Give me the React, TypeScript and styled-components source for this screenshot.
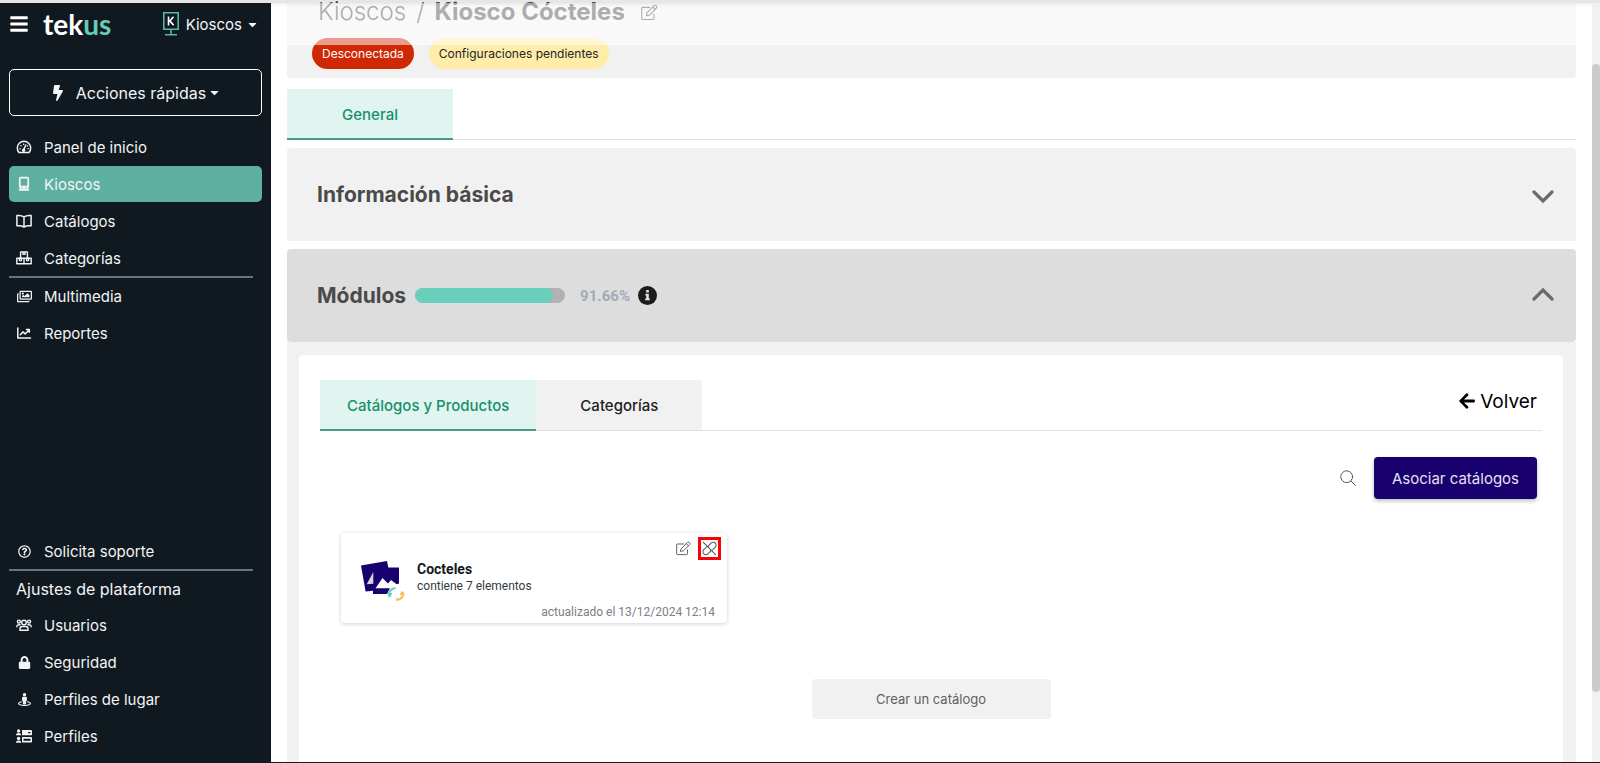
import React from "react";
import styled, { createGlobalStyle, css } from "styled-components";
import {
  FaBars,
  FaBolt,
  FaCaretDown,
  FaLock,
  FaRegImages,
  FaRegQuestionCircle,
  FaStreetView,
  FaArrowLeft,
} from "react-icons/fa";

const GlobalStyle = createGlobalStyle`
  *, *::before, *::after { box-sizing: border-box; }
  html, body, #root { height: 100%; }
  body {
    margin: 0;
    background: #fff;
    color: #212529;
    font-family: Inter, "Open Sans", sans-serif;
    font-size: 16px;
    overflow: hidden;
  }
  button { font-family: inherit; border: 0; padding: 0; background: none; cursor: pointer; }
  a { color: inherit; text-decoration: none; }
  h1, h2, h3, p, ul { margin: 0; padding: 0; }
  svg { display: block; flex: none; }
`;

const Shell = styled.div`
  display: flex;
  flex-direction: column;
  height: 100vh;
  border-top: 3px solid #e6e6e6;
  border-bottom: 1px solid #1b1b24;
`;

const Columns = styled.div`
  display: flex;
  flex: 1;
  min-height: 0;
`;

/* Sidebar */
const Sidebar = styled.aside`
  display: flex;
  flex-direction: column;
  flex: none;
  width: 271px;
  padding: 0 9px 8px;
  background: #111920;
  color: #f2f4f5;
`;

const Brand = styled.header`
  display: flex;
  align-items: center;
  height: 42px;
  margin-bottom: 24px;
`;

const MenuToggle = styled.button`
  color: #fff;
  margin-right: 14px;
`;

const Logo = styled.a`
  font: 700 28px/36px Lato, sans-serif;
  color: #fff;
  span { color: #64cdb8; }
`;

const AppPicker = styled.button`
  display: flex;
  align-items: center;
  gap: 4px;
  margin-left: auto;
  margin-right: 3px;
  font-size: 15px;
  color: #f2f4f5;
  svg:first-child { margin-right: 3px; }
`;

const QuickActions = styled.button`
  display: flex;
  align-items: center;
  justify-content: center;
  height: 47px;
  margin-bottom: 13px;
  border: 1px solid #fff;
  border-radius: 5px;
  font-size: 16px;
  color: #f2f4f5;
  svg:first-child { margin-right: 10px; }
  svg:last-child { margin-left: 2px; }
`;

const NavList = styled.ul`
  display: flex;
  flex-direction: column;
  gap: 1px;
  list-style: none;
`;

const NavLink = styled.a<{ $active?: boolean }>`
  display: grid;
  grid-template-columns: 16px 1fr;
  align-items: center;
  justify-items: start;
  column-gap: 12px;
  height: 36px;
  padding-left: 7px;
  border-radius: 5px;
  font-size: 15px;
  ${(p) => p.$active && css`background: #5db09f;`}
  svg { justify-self: center; }
`;

const NavRule = styled.hr`
  width: 244px;
  margin: 0;
  border: 0;
  border-top: 2px solid #6d727a;
`;

const NavHeading = styled.h2`
  padding-left: 7px;
  font-size: 16px;
  font-weight: 400;
  line-height: 36px;
`;

const Spacer = styled.div`
  flex: 1;
`;

/* Main */
const Main = styled.main`
  position: relative;
  display: flex;
  flex-direction: column;
  flex: 1;
  min-width: 0;
  padding: 0 16px;
`;

const StickyVeil = styled.div`
  position: absolute;
  inset: 0 0 auto;
  height: 42px;
  background: linear-gradient(rgba(0, 0, 0, 0.06), transparent 4px), rgba(255, 255, 255, 0.55);
  pointer-events: none;
`;

const PageHead = styled.header`
  padding: 0 25px 9px;
  background: #f1f1f1;
  border-radius: 0 0 4px 4px;
`;

const Crumbs = styled.h1`
  display: flex;
  align-items: center;
  gap: 10px;
  height: 18px;
  margin-bottom: 17px;
  padding-left: 6px;
  font-size: 24px;
  line-height: 18px;
  font-weight: 300;
  color: #4a4a4a;
  strong { font-weight: 700; }
  button { margin-left: 6px; color: #4a4a4a; }
`;

const Badges = styled.div`
  display: flex;
  gap: 15px;
`;

const Badge = styled.span<{ $tone: "danger" | "warning" }>`
  padding: 0 10px;
  border-radius: 16px;
  font-size: 12px;
  line-height: 31px;
  ${(p) =>
    p.$tone === "danger"
      ? css`background: #d02704; color: #fff;`
      : css`background: #ffeca8; color: #212529;`}
`;

const TabBar = styled.div`
  display: flex;
  min-height: 51px;
  border-bottom: 1px solid #dfe1e2;
`;

const Tab = styled.button<{ $active?: boolean }>`
  min-width: 166px;
  padding: 0 27px;
  background: #f1f1f1;
  font-size: 15px;
  font-weight: 500;
  color: #212121;
  ${(p) =>
    p.$active &&
    css`
      margin-bottom: -1px;
      padding-top: 2px;
      border-bottom: 2px solid #4a9a86;
      background: #e0f5ef;
      color: #178f6c;
    `}
`;

const PageTabs = styled(TabBar)`
  margin: 11px 0 8px;
`;

const PanelHead = styled.button<{ $open?: boolean }>`
  display: flex;
  align-items: center;
  flex: none;
  height: 93px;
  padding: 0 22px 0 30px;
  border-radius: ${(p) => (p.$open ? "4px" : "4px 4px 0 0")};
  background: ${(p) => (p.$open ? "#ddd" : "#f1f1f1")};
  margin-bottom: ${(p) => (p.$open ? 0 : 8)}px;
  text-align: left;
  color: #4a4a4a;
  > svg:last-child { margin-left: auto; color: #6b6b6b; }
`;

const PanelTitle = styled.span`
  font-size: 21px;
  font-weight: 700;
`;

const Track = styled.span`
  width: 150px;
  height: 15px;
  margin: 0 15px 0 9px;
  border-radius: 8px;
  background: #b2b2b2;
  overflow: hidden;
`;

const Fill = styled.span`
  display: block;
  height: 100%;
  border-radius: 8px;
  background: #69cfba;
`;

const Percent = styled.span`
  margin-right: 8px;
  font: 700 15px/20px Roboto, sans-serif;
  color: #a3abb8;
`;

const PanelBody = styled.section`
  flex: 1;
  display: flex;
  padding: 13px 13px 0 12px;
  background: #f1f1f1;
`;

const Sheet = styled.div`
  flex: 1;
  display: flex;
  flex-direction: column;
  padding: 25px 21px 0;
  border-radius: 4px 4px 0 0;
  background: #fff;
`;

const BackLink = styled.a`
  display: flex;
  align-items: center;
  gap: 4px;
  margin: 0 5px 8px auto;
  font-size: 19px;
  color: #000;
`;

const Toolbar = styled.div`
  display: flex;
  align-items: center;
  justify-content: flex-end;
  gap: 18px;
  margin: 26px 5px 34px 0;
`;

const IconButton = styled.button`
  display: grid;
  place-items: center;
  color: #555;
`;

const PrimaryButton = styled.button`
  height: 42px;
  padding: 0 18px;
  border-radius: 4px;
  background: #18006e;
  box-shadow: 0 2px 4px rgba(0, 0, 0, 0.25);
  font-size: 15px;
  color: #e4e1f2;
`;

const Card = styled.article`
  display: flex;
  flex-direction: column;
  width: 386px;
  height: 90px;
  margin-left: 21px;
  padding: 4px 6px 4px 20px;
  border-radius: 4px;
  background: #fff;
  box-shadow: 0 1px 4px rgba(0, 0, 0, 0.18);
  font-family: Roboto, sans-serif;
`;

const CardActions = styled.div`
  display: flex;
  justify-content: flex-end;
  align-items: center;
  gap: 7px;
  height: 23px;
  margin-bottom: 1px;
`;

const MarkedButton = styled(IconButton)`
  width: 23px;
  height: 23px;
  border: 3px solid #fb0007;
`;

const CardBody = styled.div`
  display: flex;
  gap: 12px;
  height: 42px;
  line-height: 16px;
  font-size: 12px;
  color: #343a40;
  h3 { font-size: 14px; font-weight: 700; color: #14191f; line-height: 17px; }
`;

const CardDate = styled.p`
  margin: 2px 6px 0 0;
  text-align: right;
  font-size: 12px;
  line-height: 14px;
  color: #7b8086;
`;

const CreateButton = styled.button`
  align-self: center;
  width: 239px;
  height: 40px;
  margin-top: 56px;
  border-radius: 4px;
  background: #f1f1f1;
  font-size: 13px;
  color: #606060;
`;

const ScrollTrack = styled.div`
  flex: none;
  width: 8px;
  padding: 61px 0 70px;
  background: #f1f1f1;
`;

const ScrollThumb = styled.div`
  height: 100%;
  border-radius: 4px;
  background: #cbcbcb;
`;

/* Icons */
type IconProps = { size?: number };

const Outline = ({ size = 16, width = 1.5, children }: IconProps & { width?: number; children: React.ReactNode }) => (
  <svg width={size} height={size} viewBox="0 0 16 16" fill="none" stroke="currentColor" strokeWidth={width} strokeLinecap="round" strokeLinejoin="round" aria-hidden="true">
    {children}
  </svg>
);

const GaugeIcon = () => (
  <Outline>
    <path d="M3 13.500a6.700 6.700 0 1 1 10 0Z" />
    <path d="M7.600 11 9.800 6" />
    <circle cx="7.600" cy="11.200" r="1" />
    <path d="M4 9.700h.1M5 6.700h.1M7.600 5.300h.1M12 9.700h.1M11.500 6.900h.1" />
  </Outline>
);
const KioskIcon = () => (
  <Outline width={1.7}>
    <rect x="3.800" y="1.700" width="8.400" height="9" rx="0.8" />
    <path d="M4.500 10.700v2.600h7v-2.600M3.500 14h9M7.200 12.200h1.600" />
  </Outline>
);
const BookIcon = () => (
  <Outline>
    <path d="M8 3.900C6 2.500 3.500 2.200.9 2.500v10.300c2.600-.3 5.100 0 7.100 1.200 2-1.200 4.500-1.500 7.100-1.200V2.500C12.500 2.200 10 2.500 8 3.900ZM8 3.900V14" />
  </Outline>
);
const BoxesIcon = () => (
  <Outline width={1.4}>
    <path d="M4.600 1.900h6.800v6.300H4.600zM.8 8.200h7.200v5.600H.8zM8 8.200h7.200v5.600H8z" />
    <path d="M7 2v2.300h2V2M3.400 8.300v2.300h2V8.300M10.600 8.300v2.300h2V8.300" />
  </Outline>
);
const ReportIcon = () => (
  <Outline>
    <path d="M1.800 3v10h12.700M4.300 9.800l2.600-2.900 2.300 2L13 5M10.500 4.500h2.800v2.800" />
  </Outline>
);
const UsersIcon = () => (
  <Outline width={1.400}>
    <circle cx="8" cy="5.500" r="2.300" />
    <circle cx="2.900" cy="4.600" r="1.500" />
    <circle cx="13.100" cy="4.600" r="1.500" />
    <path d="M3.900 13.300v-1.500c0-1.500 1-2.300 2.300-2.300h3.600c1.300 0 2.300.8 2.300 2.300v1.500ZM.8 9.800c0-1.500.8-2.100 2.300-2.100h1M15.200 9.800c0-1.500-.8-2.100-2.300-2.100h-1" />
  </Outline>
);
const ProfilesIcon = () => (
  <svg width="16" height="16" viewBox="0 0 16 16" fill="currentColor" aria-hidden="true">
    <circle cx="2.600" cy="3" r="1.700" />
    <path d="M0 7.300c0-1.600 1-2.300 2.600-2.300s2.600.7 2.600 2.300ZM0 14.800c0-1.600 1-2.300 2.600-2.300s2.600.7 2.600 2.300Z" />
    <circle cx="2.600" cy="10.500" r="1.700" />
    <path fillRule="evenodd" d="M6 2h9.300l.7.700v4l-.7.600H6Zm6 2v1.300h2.500V4ZM6 9h9.300l.7.700v4l-.7.700H6Zm1.500 1.700v2h7v-2Z" />
  </svg>
);
const BrandKiosk = () => (
  <svg width="16" height="24" viewBox="0 0 16 24" fill="none" aria-hidden="true">
    <path d="M.8.8h14.400v16.400H.8zM8 17v5.500M2 22.700h12" stroke="#55b7a3" strokeWidth="1.600" />
    <path d="M5.500 4.500v9M10.500 4.800 6.800 8.900l3.900 4.300" stroke="#fff" strokeWidth="1.600" />
  </svg>
);
const EditIcon = ({ size = 16 }: IconProps) => (
  <Outline size={size} width={1}>
    <path d="M12.200 9.500v4.200c0 .5-.3.800-.8.800H1.500c-.5 0-.8-.3-.8-.8V4c0-.5.3-.8.800-.8h6.700" />
    <path d="m5.500 8.300 6.700-6.700c.5-.5 1.300-.5 1.800 0l.5.500c.5.500.5 1.300 0 1.800l-6.700 6.700-2.700.4ZM11 2.800l2.300 2.300" />
  </Outline>
);
const UnlinkIcon = () => (
  <Outline size={15} width={1.1}>
    <path d="M1.500 1.500l13 13" />
    <path d="M6.800 5.200 9.700 2.300a3.100 3.100 0 0 1 4.400 0 3.100 3.100 0 0 1 0 4.400l-2.900 2.900c-.7.700-1.600.9-2.400.8M9.200 10.800l-2.900 2.900a3.100 3.100 0 0 1-4.400 0 3.100 3.100 0 0 1 0-4.400l2.900-2.900c.7-.7 1.600-.9 2.400-.8" />
  </Outline>
);
const SearchIcon = () => (
  <Outline width={1}>
    <circle cx="6.700" cy="6.700" r="5.900" />
    <path d="m11 11 4.400 4.400" />
  </Outline>
);
const InfoIcon = () => (
  <svg width="19" height="19" viewBox="0 0 19 19" aria-hidden="true">
    <circle cx="9.500" cy="9.500" r="9.500" fill="#1c1c1c" />
    <path d="M8.200 4h2.600v2.500H8.200zM7.400 7.700h3.400v4.800h1v1.700H7.200v-1.700h1V9.400h-.8z" fill="#e4e4e4" />
  </svg>
);
const Chevron = ({ up }: { up?: boolean }) => (
  <svg width="22" height="18" viewBox="0 0 22 18" fill="none" stroke="currentColor" strokeWidth="3.200" strokeLinecap="round" aria-hidden="true">
    <path d={up ? "M2 12l9-9 9 9" : "M2 6l9 9 9-9"} />
  </svg>
);
const CatalogIcon = () => (
  <svg width="44" height="40" viewBox="0 0 44 40" aria-hidden="true">
    <path d="M0 4.500 26 0l1.300 6.500H38V22.500L30 25l-4 8H12v-3.300l-7.400.8Z" fill="#18006e" />
    <path d="M12.300 11 5.700 23.300l6.600-.6Z" fill="#d5d5d5" />
    <path d="M14.500 27.300 21.500 17l5.500 5.500 3-3.500 7 5.200v3.100Z" fill="#fff" />
    <path d="M28.500 36c-1.500-5 1.500-8.500 6-9" fill="none" stroke="#69cfba" strokeWidth="2.200" />
    <path d="m25.500 32 3.500 4.500 2.500-4.500Z" fill="#69cfba" />
    <path d="M41.500 31c1.200 5-1.500 8-6.500 7.700" fill="none" stroke="#f8bd58" strokeWidth="2.200" />
    <path d="m38.500 34 2.300-4.200 3.200 4.200Z" fill="#f8bd58" />
  </svg>
);

const mainLinks = [
  { label: "Panel de inicio", icon: <GaugeIcon /> },
  { label: "Kioscos", icon: <KioskIcon />, active: true },
  { label: "Catálogos", icon: <BookIcon /> },
  { label: "Categorías", icon: <BoxesIcon /> },
];
const mediaLinks = [
  { label: "Multimedia", icon: <FaRegImages size={15} /> },
  { label: "Reportes", icon: <ReportIcon /> },
];
const platformLinks = [
  { label: "Usuarios", icon: <UsersIcon /> },
  { label: "Seguridad", icon: <FaLock size={13} /> },
  { label: "Perfiles de lugar", icon: <FaStreetView size={13} /> },
  { label: "Perfiles", icon: <ProfilesIcon /> },
];

type LinkItem = { label: string; icon: React.ReactNode; active?: boolean };

const Nav = ({ items }: { items: LinkItem[] }) => (
  <NavList>
    {items.map((item) => (
      <li key={item.label}>
        <NavLink href="#" $active={item.active}>
          {item.icon}
          {item.label}
        </NavLink>
      </li>
    ))}
  </NavList>
);

const progress = 91.66;

export default function App() {
  return (
    <>
      <GlobalStyle />
      <Shell>
        <Columns>
          <Sidebar>
            <Brand>
              <MenuToggle aria-label="Menú">
                <FaBars size={20} />
              </MenuToggle>
              <Logo href="#">
                tek<span>us</span>
              </Logo>
              <AppPicker>
                <BrandKiosk />
                Kioscos
                <FaCaretDown size={13} />
              </AppPicker>
            </Brand>
            <QuickActions>
              <FaBolt size={16} />
              Acciones rápidas
              <FaCaretDown size={13} />
            </QuickActions>
            <Nav items={mainLinks} />
            <NavRule />
            <Nav items={mediaLinks} />
            <Spacer />
            <Nav items={[{ label: "Solicita soporte", icon: <FaRegQuestionCircle size={13} /> }]} />
            <NavRule />
            <NavHeading>Ajustes de plataforma</NavHeading>
            <Nav items={platformLinks} />
          </Sidebar>

          <Main>
            <PageHead>
              <Crumbs>
                <a href="#">Kioscos</a>
                <span>/</span>
                <strong>Kiosco Cócteles</strong>
                <IconButton aria-label="Editar nombre">
                  <EditIcon size={17} />
                </IconButton>
              </Crumbs>
              <Badges>
                <Badge $tone="danger">Desconectada</Badge>
                <Badge $tone="warning">Configuraciones pendientes</Badge>
              </Badges>
            </PageHead>
            <PageTabs>
              <Tab $active>General</Tab>
            </PageTabs>
            <PanelHead>
              <PanelTitle>Información básica</PanelTitle>
              <Chevron />
            </PanelHead>
            <PanelHead $open>
              <PanelTitle>Módulos</PanelTitle>
              <Track>
                <Fill style={{ width: `${progress}%` }} />
              </Track>
              <Percent>{progress}%</Percent>
              <InfoIcon />
              <Chevron up />
            </PanelHead>
            <PanelBody>
              <Sheet>
                <TabBar>
                  <Tab $active>Catálogos y Productos</Tab>
                  <Tab>Categorías</Tab>
                  <BackLink href="#">
                    <FaArrowLeft size={18} />
                    Volver
                  </BackLink>
                </TabBar>
                <Toolbar>
                  <IconButton aria-label="Buscar">
                    <SearchIcon />
                  </IconButton>
                  <PrimaryButton>Asociar catálogos</PrimaryButton>
                </Toolbar>
                <Card>
                  <CardActions>
                    <IconButton aria-label="Editar catálogo">
                      <EditIcon size={15} />
                    </IconButton>
                    <MarkedButton aria-label="Desvincular catálogo">
                      <UnlinkIcon />
                    </MarkedButton>
                  </CardActions>
                  <CardBody>
                    <CatalogIcon />
                    <div>
                      <h3>Cocteles</h3>
                      <p>contiene 7 elementos</p>
                    </div>
                  </CardBody>
                  <CardDate>actualizado el 13/12/2024 12:14</CardDate>
                </Card>
                <CreateButton>Crear un catálogo</CreateButton>
              </Sheet>
            </PanelBody>
            <StickyVeil />
          </Main>
          <ScrollTrack>
            <ScrollThumb />
          </ScrollTrack>
        </Columns>
      </Shell>
    </>
  );
}
